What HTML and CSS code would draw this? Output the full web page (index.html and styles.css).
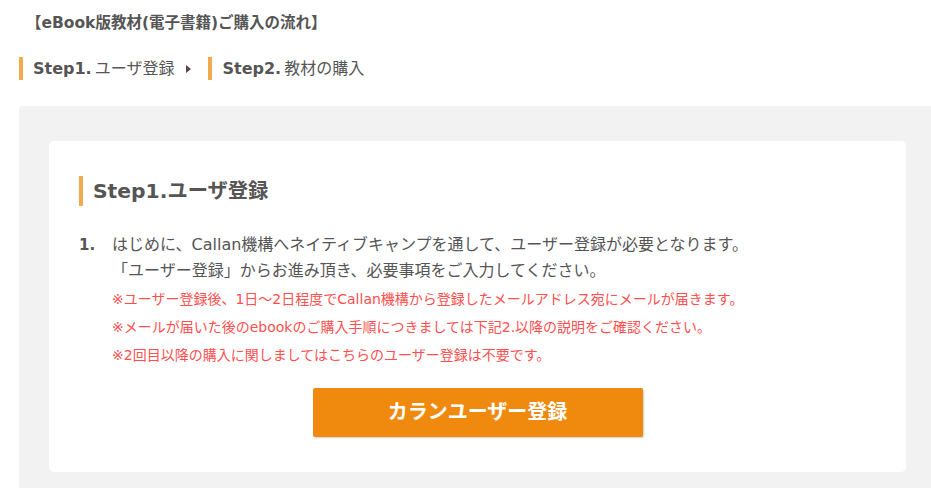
FILE: index.html
```html
<!DOCTYPE html>
<html lang="ja">
<head>
    <meta charset="UTF-8">
    <meta name="viewport" content="width=device-width, initial-scale=1.0">
    <title>eBook版教材ご購入の流れ</title>
    <link rel="stylesheet" href="styles.css">
</head>
<body>
    <div class="page">
        <h1 class="flow-title">【eBook版教材(電子書籍)ご購入の流れ】</h1>

        <div class="flow-steps">
            <div class="flow-step"><b>Step1.</b> ユーザ登録</div>
            <span class="flow-arrow"></span>
            <div class="flow-step"><b>Step2.</b> 教材の購入</div>
        </div>

        <div class="flow-box">
            <div class="card">
                <h2 class="card-title">Step1.ユーザ登録</h2>
                <ol class="step-list">
                    <li>
                        <span class="step-num">1.</span>
                        <div class="step-body">
                            <p>はじめに、Callan機構へネイティブキャンプを通して、ユーザー登録が必要となります。<br>「ユーザー登録」からお進み頂き、必要事項をご入力してください。</p>
                            <ul class="notes">
                                <li>※ユーザー登録後、1日〜2日程度でCallan機構から登録したメールアドレス宛にメールが届きます。</li>
                                <li>※メールが届いた後のebookのご購入手順につきましては下記2.以降の説明をご確認ください。</li>
                                <li>※2回目以降の購入に関しましてはこちらのユーザー登録は不要です。</li>
                            </ul>
                        </div>
                    </li>
                </ol>
                <div class="btn-wrap">
                    <a href="#" class="btn-register">カランユーザー登録</a>
                </div>
            </div>
        </div>
    </div>
</body>
</html>
```

FILE: styles.css
```css
body { margin: 0; overflow: hidden; font-family: "DejaVu Sans", "Noto Sans CJK JP", sans-serif; color: #555; background: #fff; }
.page { padding-left: 19px; }

.flow-title { margin: 0; padding: 12px 0 0 7px; font-size: 15.5px; line-height: 22px; font-weight: bold; }

.flow-steps { display: flex; align-items: center; margin-top: 23px; }
.flow-step { border-left: 4px solid #f2ab4c; padding-left: 10px; height: 23px; line-height: 23px; font-size: 16px; }
.flow-step b { font-weight: bold; margin-right: -2px; }
.flow-arrow { width: 0; height: 0; margin: 0 17px 0 12px; border-left: 5px solid #5b4545; border-top: 4px solid transparent; border-bottom: 4px solid transparent; }

.flow-box { margin-top: 26px; width: 917px; box-sizing: border-box; padding: 35px 30px; background: #f2f2f2; border-radius: 3px; }
.card { background: #fff; border-radius: 5px; padding: 35px 30px; }
.card-title { margin: 0; border-left: 4px solid #f2ab4c; padding-left: 10px; height: 30px; line-height: 30px; font-size: 20.3px; font-weight: bold; }

.step-list { list-style: none; margin: 26px 0 0; padding: 0; }
.step-list > li { display: flex; }
.step-num { width: 33px; flex-shrink: 0; font-weight: bold; font-size: 15px; line-height: 26px; }
.step-body p { margin: 0; font-size: 16px; line-height: 26px; }
.notes { list-style: none; margin: 1px 0 0; padding: 0; color: #ff4f4f; font-size: 14px; line-height: 28px; }

.btn-wrap { display: flex; justify-content: center; margin-top: 19px; }
.btn-register { display: block; width: 330px; height: 49px; line-height: 49px; text-align: center; background: #f08a0f; color: #fff; font-size: 20px; font-weight: bold; text-decoration: none; border-radius: 2px; box-shadow: 1px 1px 2px rgba(0, 0, 0, 0.2); }
```
